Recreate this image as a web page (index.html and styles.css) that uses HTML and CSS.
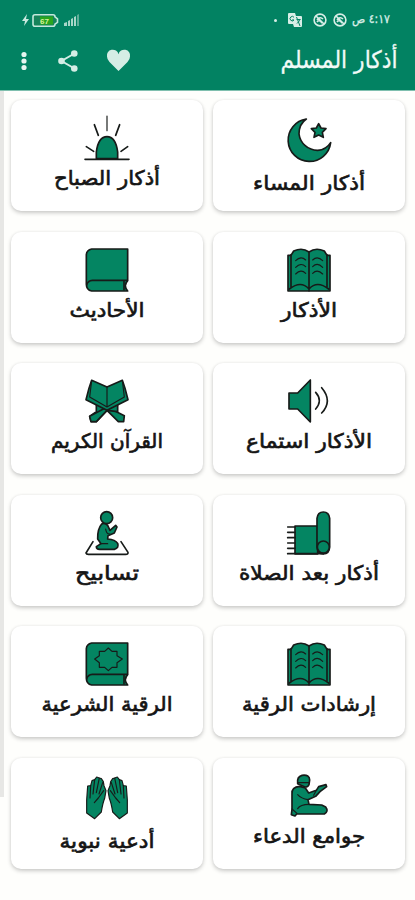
FILE: index.html
```html
<!DOCTYPE html>
<html lang="ar" dir="rtl">
<head>
<meta charset="utf-8">
<title>أذكار المسلم</title>
<link rel="stylesheet" href="styles.css">
</head>
<body>
<svg class="defs" width="0" height="0">
  <symbol id="open-book" viewBox="0 0 132 132">
    <path class="shape" d="M12 22H3V129H129V22H120L112 9Q86-3 66 12Q46-3 20 9Z"/>
    <path class="line" d="M66 12V128M12 20V116M120 20V116M7 123Q42 96 66 123Q90 96 125 123"/>
    <path class="line thin" d="M26 38Q42 22 56 36M26 58Q42 42 56 56M26 78Q42 62 56 76M77 36Q91 22 107 38M77 56Q91 42 107 58M77 76Q91 62 107 78"/>
  </symbol>
  <symbol id="closed-book" viewBox="0 0 132 132">
    <path class="shape" d="M20 3H128V98Q114 113 128 129H20Q4 126 4 108V20Q5 6 20 3Z"/>
    <path class="line" d="M5 111Q8 98 22 97H127M117 98V126"/>
    <path fill="#fff" d="M132 101Q119 112 132 125Z"/>
  </symbol>
</svg>
<header class="appbar">
  <div class="status">
    <div class="status-group">
      <span class="clock"><svg width="46" height="20" viewBox="0 0 46 20"><text x="23" y="13" textLength="38" lengthAdjust="spacingAndGlyphs">٤:١٧ ص</text></svg></span>
      <svg class="ring" width="14" height="14" viewBox="0 0 14 14"><circle cx="7" cy="7" r="5.9"/><path d="M3 3l8 8M4 7q3-4 6-1M4 9q2-3 5 1"/></svg>
      <svg class="ring" width="14" height="14" viewBox="0 0 14 14"><circle cx="7" cy="7" r="5.9"/><path d="M3 3l8 8M4 7q3-4 6-1M4 9q2-3 5 1"/></svg>
      <svg class="translate" width="14" height="14" viewBox="0 0 14 14"><path fill="#d8eee7" d="M1 0h6l1 3h5q1 0 1 1v9q0 1-1 1H6l-1-3H1q-1 0-1-1V1q0-1 1-1Z"/><path fill="none" stroke="#028262" d="M6 4.3A2.2 2.2 0 1 0 6 7H4M8.5 4l3.5 9M8.5 6.500h4M12 6q-1 3-3 4.500"/></svg>
      <i class="dot"></i>
    </div>
    <div class="status-group status-left">
      <svg width="16" height="12" viewBox="0 0 16 12"><path fill="#a9d6c8" d="M0 12V9l3-1v4ZM4 12V7l2-1v6ZM7 12V5l2-1v8ZM10 12V3l2-1v10Z"/><path fill="#5fae98" d="M13 12V1l2-1v12Z"/></svg>
      <svg width="27" height="13" viewBox="0 0 27 13"><path fill="#16835b" stroke="#c4e8dc" stroke-width="1.600" d="M3 .8h18q2 0 2 2l2.500 2v3.500L23 10.200q0 2-2 2H3q-2 0-2-2V2.800q0-2 2-2Z"/><path fill="#29a51e" d="M8 2.500h13v8H8Z"/><text class="battery-level" x="12.500" y="9.700">67</text></svg>
      <svg width="7" height="12" viewBox="0 0 7 12"><path fill="#c9e9df" d="M5 0 0 7h3L2 12 7 5H4Z"/></svg>
    </div>
  </div>
  <div class="toolbar">
    <h1><svg width="126" height="42" viewBox="0 0 126 42"><text x="63" y="28" textLength="117" lengthAdjust="spacingAndGlyphs">أذكار المسلم</text></svg></h1>
    <div class="actions">
      <svg width="23" height="20" viewBox="0 0 23 20"><path fill="#d5ede5" d="M11.500 20 2.500 11Q0 8.500 0 5.500A5.700 5.500 0 0 1 11.500 3.200 5.700 5.500 0 0 1 23 5.500Q23 8.500 20.500 11Z"/></svg>
      <svg width="20" height="22" viewBox="0 0 20 22"><path stroke="#d5ede5" stroke-width="2" fill="none" d="M16.500 3.500 3.500 11l13 7.500"/><g fill="#d5ede5"><circle cx="16.300" cy="3.500" r="3.300"/><circle cx="3.500" cy="11" r="3.300"/><circle cx="16.300" cy="18.500" r="3.300"/></g></svg>
      <svg width="6" height="20" viewBox="0 0 6 20"><g fill="#e5f5ef"><circle cx="3" cy="3.500" r="2.600"/><circle cx="3" cy="10" r="2.600"/><circle cx="3" cy="16.500" r="2.600"/></g></svg>
    </div>
  </div>
</header>
<main class="grid">
  <a class="card card-low">
    <svg class="icon" viewBox="0 0 132 132"><path class="shape" d="M58 3A64 64 0 1 0 131 74A49 49 0 0 1 92 97A56 56 0 0 1 36 48Q36 18 58 3Z"/><path class="shape" d="M95 17l7 13 15 2-11 11 3 15-14-7-14 7 3-15-11-11 15-2Z"/></svg>
    <svg class="label" viewBox="0 0 192 34"><text x="96" y="23" textLength="112" lengthAdjust="spacingAndGlyphs">أذكار المساء</text></svg>
  </a>
  <a class="card">
    <svg class="icon" viewBox="0 0 132 132"><path class="shape" d="M34 128V108Q40 62 66 62T98 108V128Z"/><path class="line" d="M0 130H132M28 26 40 58M104 26 92 58M4 92 26 106M128 92 108 106"/><path class="line thin" d="M66 0V44"/></svg>
    <svg class="label" viewBox="0 0 192 34"><text x="96" y="23" textLength="106" lengthAdjust="spacingAndGlyphs">أذكار الصباح</text></svg>
  </a>
  <a class="card">
    <svg class="icon"><use href="#open-book"/></svg>
    <svg class="label" viewBox="0 0 192 34"><text x="96" y="23" textLength="56" lengthAdjust="spacingAndGlyphs">الأذكار</text></svg>
  </a>
  <a class="card">
    <svg class="icon"><use href="#closed-book"/></svg>
    <svg class="label" viewBox="0 0 192 34"><text x="96" y="23" textLength="75" lengthAdjust="spacingAndGlyphs">الأحاديث</text></svg>
  </a>
  <a class="card">
    <svg class="icon" viewBox="0 0 132 132"><path class="shape" d="M6 42H32L70 3V129L32 90H6Z"/><path class="line" d="M86 40Q108 64 86 90M104 26Q138 66 104 102"/></svg>
    <svg class="label" viewBox="0 0 192 34"><text x="96" y="23" textLength="126" lengthAdjust="spacingAndGlyphs">الأذكار استماع</text></svg>
  </a>
  <a class="card">
    <svg class="icon" viewBox="0 0 132 132"><path class="shape" d="M34 76H50L118 110 116 128H100L66 94 34 128H18L14 112 34 98Z"/><path class="shape" d="M98 76H82L14 112 18 128H34L66 94 98 98Z"/><path class="shape" d="M20 4 12 28 3 62 66 94 129 62 120 28 112 4 66 24Z"/><path class="line thin" d="M66 24V82M20 4 14 54 66 84 118 54 112 4"/></svg>
    <svg class="label" viewBox="0 0 192 34"><text x="96" y="23" textLength="112" lengthAdjust="spacingAndGlyphs">القرآن الكريم</text></svg>
  </a>
  <a class="card">
    <svg class="icon" viewBox="0 0 132 132"><path class="shape" d="M24 45H92V129H24Z"/><path class="shape" d="M90 108V22Q92 3 109 3T128 22V108Q127 129 109 129T90 108Z"/><circle class="shape" cx="109" cy="108" r="18"/><path class="line" d="M2 48H24M2 64H24M2 80H24M2 96H24M2 112H24M2 128H109"/></svg>
    <svg class="label" viewBox="0 0 192 34"><text x="96" y="23" textLength="140" lengthAdjust="spacingAndGlyphs">أذكار بعد الصلاة</text></svg>
  </a>
  <a class="card">
    <svg class="icon" viewBox="0 0 132 132"><path class="line" d="M24 92 3 126Q4 130 10 130H122Q130 130 129 124L108 92"/><path class="shape" d="M50 39Q37 54 38 84L48 98 34 107Q34 114 44 115H88Q103 111 98 97 91 86 68 84L69 74 88 66 96 48 92 43 75 58 68 43Q60 34 50 39Z"/><circle class="shape" cx="65" cy="20" r="18"/><path class="line thin" d="M46 98H68M62 54Q64 70 75 69"/></svg>
    <svg class="label" viewBox="0 0 192 34"><text x="96" y="23" textLength="64" lengthAdjust="spacingAndGlyphs">تسابيح</text></svg>
  </a>
  <a class="card">
    <svg class="icon"><use href="#open-book"/></svg>
    <svg class="label" viewBox="0 0 192 34"><text x="96" y="23" textLength="134" lengthAdjust="spacingAndGlyphs">إرشادات الرقية</text></svg>
  </a>
  <a class="card">
    <svg class="icon" viewBox="0 0 132 132"><use href="#closed-book"/><path class="line thin" d="M70 18 81 28H96V41L112 51 96 62V76H81L70 86 59 76H43V62L29 51 43 41V28H59Z"/></svg>
    <svg class="label" viewBox="0 0 192 34"><text x="96" y="23" textLength="131" lengthAdjust="spacingAndGlyphs">الرقية الشرعية</text></svg>
  </a>
  <a class="card">
    <svg class="icon" viewBox="0 0 132 132"><path class="shape" d="M38 37Q13 39 15 60V106L13 122 24 126 29 120H112Q126 112 116 99L104 93 66 91 63 77 86 67 99 53 119 38 117 32 95 38 88 49 65 57 55 42Z"/><path class="shape" d="M32 29Q29 8 45 4 68 1 68 18L66 32Q61 43 49 37Z"/><path class="line thin" d="M34 26H66M32 62Q43 74 63 77M66 91Q40 91 32 104M88 49 80 64M30 118 15 105"/></svg>
    <svg class="label" viewBox="0 0 192 34"><text x="96" y="23" textLength="112" lengthAdjust="spacingAndGlyphs">جوامع الدعاء</text></svg>
  </a>
  <a class="card card-low">
    <svg class="icon" viewBox="0 0 132 132"><g id="hand"><path class="shape thin" d="M5 111V72L8 30 17 29 21 14 29 11 35 3 43 6 49 8 55 17 57 29 63 44 59 67Q53 82 49 108L29 128Z"/><path class="line thin" d="M17 29 15 66M29 11 24 54M43 6 34 50M53 20 42 54M56 44 40 66 28 80"/></g><use href="#hand" transform="matrix(-1 0 0 1 132 0)"/></svg>
    <svg class="label" viewBox="0 0 192 34"><text x="96" y="23" textLength="95" lengthAdjust="spacingAndGlyphs">أدعية نبوية</text></svg>
  </a>
</main>
</body>
</html>
```
FILE: styles.css
```css
* { box-sizing: border-box; }
body {
  margin: 0;
  height: 900px;
  overflow: hidden;
  background: #fefefc;
  font-family: "DejaVu Sans", sans-serif;
}
svg { display: block; flex: none; overflow: visible; }
text { text-anchor: middle; }
.defs { position: absolute; }

.appbar { height: 91px; background: #028262; border-bottom: 1px solid #7fbfae; }
.status {
  display: flex;
  justify-content: space-between;
  align-items: center;
  height: 40px;
  padding: 0 21px 0 22px;
}
.status-group { display: flex; align-items: center; gap: 6px; }
.status-left { gap: 5px; }
.status-left svg:last-child { margin-right: -2px; }
.clock { margin-left: -5px; }
.clock text { font-size: 12px; fill: #d8eee7; stroke: #d8eee7; stroke-width: .3px; }
.ring { fill: none; stroke: #d8eee7; stroke-width: 1.6px; }
.translate { margin-right: 5px; }
.dot { width: 3px; height: 3px; margin-right: 5px; border-radius: 50%; background: #d8eee7; }
.battery-level { font: bold 8px "Liberation Sans", sans-serif; fill: #d5f0a0; }

.toolbar {
  display: flex;
  justify-content: space-between;
  align-items: center;
  height: 42px;
  padding: 0 13px 0 21px;
}
h1 { margin: 0; font-weight: normal; }
h1 text { font-size: 24px; fill: #f2faf7; stroke: #f2faf7; stroke-width: .3px; }
.actions { display: flex; align-items: center; gap: 29px; }
.actions svg:last-child { margin-right: 2px; }

.grid {
  display: grid;
  grid-template-columns: 192px 192px;
  grid-auto-rows: 111px;
  gap: 20.600px 10px;
  height: 809px;
  padding: 9px 10px 0 11px;
  background: linear-gradient(#e7e7e5, #e7e7e5) 0 0 / 4px 706px no-repeat;
}
.card {
  display: flex;
  flex-direction: column;
  align-items: center;
  padding-top: 16px;
  border-radius: 10px;
  background: #fff;
  box-shadow: 0 2px 4px rgba(0, 0, 0, .2), 0 0 3px rgba(0, 0, 0, .06);
}
.icon { width: 44px; height: 44px; }
.label { width: 192px; height: 34px; margin-top: 2px; }
.label text { font-size: 20px; fill: #151515; stroke: #151515; stroke-width: .65px; }
.card-low { padding-top: 18px; }
.card-low .label { margin-top: 5px; }
.shape { fill: #048562; stroke: #171b19; stroke-width: 5px; stroke-linejoin: round; }
.line { fill: none; stroke: #171b19; stroke-width: 5px; stroke-linecap: round; stroke-linejoin: round; }
.thin { stroke-width: 3.500px; }
```
